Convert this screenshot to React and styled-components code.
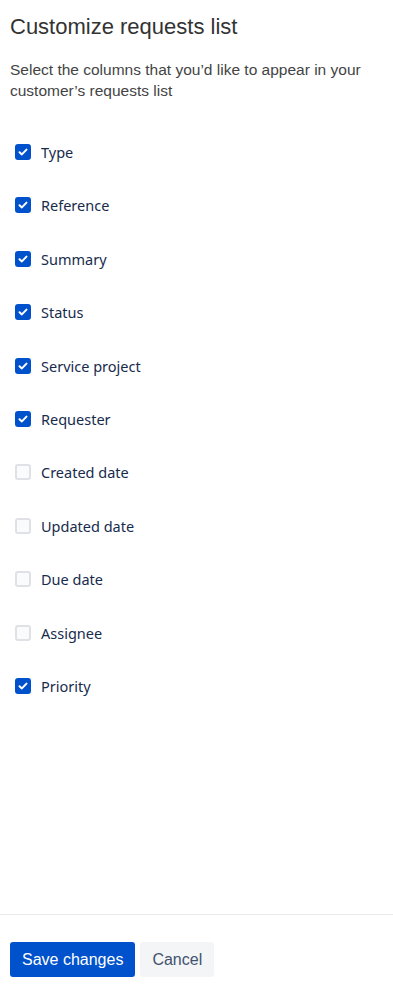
import React, { useState } from "react"
import styled, { createGlobalStyle } from "styled-components"

const GlobalStyle = createGlobalStyle`
    html, body {
        margin: 0;
        padding: 0;
        background: #ffffff;
    }
    * {
        box-sizing: border-box;
    }
`

const Page = styled.div`
    display: flex;
    flex-direction: column;
    width: 100%;
    height: 100vh;
    font-family: "Liberation Sans", Arial, sans-serif;
`

const Content = styled.div`
    flex: 1;
    padding: 13px 10px 0 10px;
`

const Title = styled.h2`
    margin: 0;
    font-size: 22px;
    line-height: 28px;
    font-weight: normal;
    color: #333333;
`

const Description = styled.p`
    margin: 18px 0 0 0;
    font-size: 15.5px;
    line-height: 21px;
    color: #444444;
    max-width: 370px;
`

const Options = styled.div`
    display: flex;
    flex-direction: column;
    gap: 29.4px;
    margin-top: 39px;
`

const Option = styled.label`
    display: flex;
    align-items: center;
    height: 24px;
    gap: 10px;
    padding-left: 5px;
    cursor: pointer;
`

const Box = styled.span`
    display: flex;
    align-items: center;
    justify-content: center;
    width: 16px;
    height: 16px;
    border-radius: 3px;
    border: 2px solid ${(p) => (p.checked ? "#0052cc" : "#dfe1e6")};
    background-color: ${(p) => (p.checked ? "#0052cc" : "#fafbfc")};
`

const Label = styled.span`
    font-family: "Noto Sans", "Open Sans", sans-serif;
    font-size: 14.5px;
    color: #172b4d;
`

const Footer = styled.div`
    display: flex;
    gap: 5px;
    border-top: 1px solid #ebecf0;
    padding: 27px 10px 22px 10px;
`

const Button = styled.button`
    height: 35px;
    padding: 0 12px;
    border: none;
    border-radius: 3px;
    font-family: "Liberation Sans", Arial, sans-serif;
    font-size: 16px;
    cursor: pointer;
    color: ${(p) => (p.primary ? "#ffffff" : "#42526e")};
    background-color: ${(p) => (p.primary ? "#0052cc" : "#f4f5f7")};
`

const columns = [
    { name: "Type", on: true },
    { name: "Reference", on: true },
    { name: "Summary", on: true },
    { name: "Status", on: true },
    { name: "Service project", on: true },
    { name: "Requester", on: true },
    { name: "Created date", on: false },
    { name: "Updated date", on: false },
    { name: "Due date", on: false },
    { name: "Assignee", on: false },
    { name: "Priority", on: true },
]

const Check = () => (
    <svg width="10" height="8" viewBox="0 0 10 8">
        <path
            d="M1.5 4.2 L3.9 6.4 L8.5 1.6"
            fill="none"
            stroke="#ffffff"
            strokeWidth="2"
            strokeLinecap="round"
            strokeLinejoin="round"
        />
    </svg>
)

export default function App() {
    const [selected, setSelected] = useState(columns.map((c) => c.on))

    const toggle = (i) => {
        setSelected(selected.map((v, j) => (j === i ? !v : v)))
    }

    return (
        <Page>
            <GlobalStyle />
            <Content>
                <Title>Customize requests list</Title>
                <Description>
                    Select the columns that you’d like to appear in your
                    customer’s requests list
                </Description>
                <Options>
                    {columns.map((c, i) => (
                        <Option key={c.name} onClick={() => toggle(i)}>
                            <Box checked={selected[i]}>
                                {selected[i] && <Check />}
                            </Box>
                            <Label>{c.name}</Label>
                        </Option>
                    ))}
                </Options>
            </Content>
            <Footer>
                <Button primary>Save changes</Button>
                <Button>Cancel</Button>
            </Footer>
        </Page>
    )
}
